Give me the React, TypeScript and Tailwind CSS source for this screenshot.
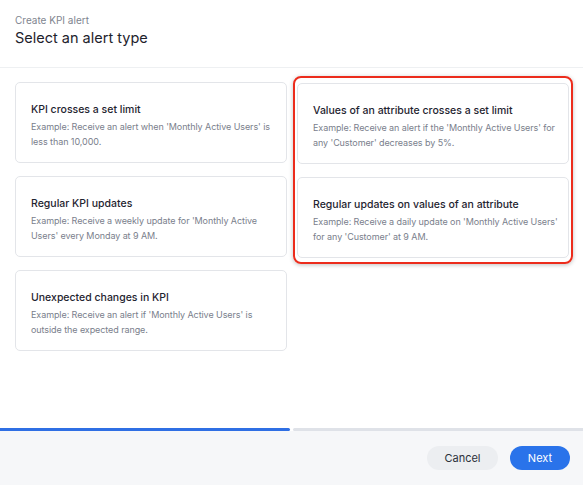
import React from 'react'

interface AlertType {
  title: string
  example: string
}

const leftTypes: AlertType[] = [
  { title: 'KPI crosses a set limit', example: "Example: Receive an alert when 'Monthly Active Users' is less than 10,000." },
  { title: 'Regular KPI updates', example: "Example: Receive a weekly update for 'Monthly Active Users' every Monday at 9 AM." },
  { title: 'Unexpected changes in KPI', example: "Example: Receive an alert if 'Monthly Active Users' is outside the expected range." },
]

const rightTypes: AlertType[] = [
  { title: 'Values of an attribute crosses a set limit', example: "Example: Receive an alert if the 'Monthly Active Users' for any 'Customer' decreases by 5%." },
  { title: 'Regular updates on values of an attribute', example: "Example: Receive a daily update on 'Monthly Active Users' for any 'Customer' at 9 AM." },
]

function TypeCard({ item }: { item: AlertType }) {
  return (
    <div className="h-[81px] w-[272px] rounded-[5px] border border-[#e3e5e9] bg-white pl-[15px] pr-[8px] pt-[20px]">
      <div className="text-[10.5px] font-medium leading-[14px] text-[#1f2430]">{item.title}</div>
      <div className="mt-[3px] text-[9px] leading-[14.5px] tracking-[-0.08px] text-[#7a808c]">{item.example}</div>
    </div>
  )
}

export default function App() {
  return (
    <div className="flex h-[485px] w-[583px] flex-col bg-white font-['Inter',sans-serif]">
      {/* header */}
      <div className="h-[68px] border-b border-[#eef0f2] px-[15px] pt-[14px]">
        <div className="text-[10px] leading-[13px] text-[#80858f]">Create KPI alert</div>
        <div className="mt-[2px] text-[14.5px] leading-[18px] text-[#1d222c]">Select an alert type</div>
      </div>

      {/* options */}
      <div className="flex flex-1 gap-[12px] px-[15px] pt-[14px]">
        <div className="flex flex-col gap-[13px]">
          {leftTypes.map((t) => (
            <TypeCard key={t.title} item={t} />
          ))}
        </div>
        <div className="-ml-[6px] -mt-[6px] self-start rounded-[8px] border-2 border-[#ec2c1c] px-[2px] pb-[4px] pt-[5px] shadow-[0_1px_4px_rgba(0,0,0,0.25)]">
          <div className="flex flex-col gap-[13px]">
            {rightTypes.map((t) => (
              <TypeCard key={t.title} item={t} />
            ))}
          </div>
        </div>
      </div>

      {/* progress */}
      <div className="flex h-[3px] gap-[3px]">
        <div className="w-[290px] rounded-r-full bg-[#2f6fe4]" />
        <div className="flex-1 rounded-l-full bg-[#dfe2e8]" />
      </div>

      {/* footer */}
      <div className="flex h-[54px] items-center justify-end gap-[12px] bg-[#f6f7f9] pr-[13px]">
        <button className="h-[24px] w-[71px] rounded-full bg-[#eceef1] text-[11px] text-[#2b303a]">Cancel</button>
        <button className="h-[24px] w-[60px] rounded-full bg-[#2a73ea] text-[11px] text-white">Next</button>
      </div>
    </div>
  )
}
